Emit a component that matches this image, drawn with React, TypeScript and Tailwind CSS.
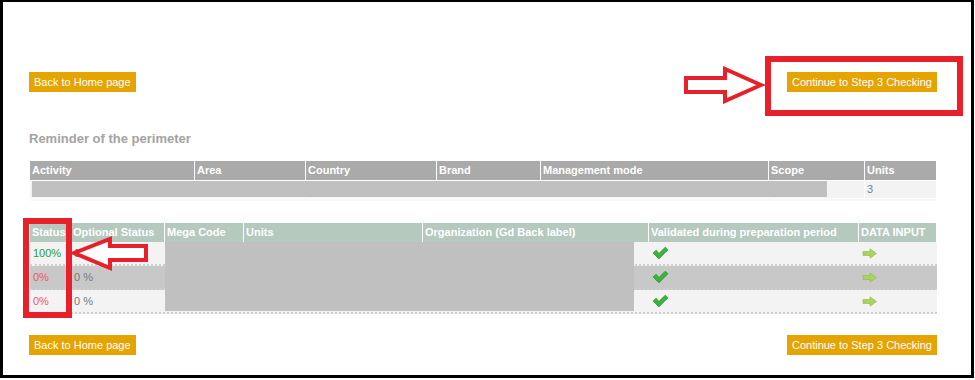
const btn =
  "h-[20px] px-[5px] bg-[#e5a400] text-white text-[11px] leading-[20px]";

const perimeterCols = [
  { label: "Activity", w: "w-[164px]" },
  { label: "Area", w: "w-[110px]" },
  { label: "Country", w: "w-[130px]" },
  { label: "Brand", w: "w-[103px]" },
  { label: "Management mode", w: "w-[227px]" },
  { label: "Scope", w: "w-[95px]" },
  { label: "Units", w: "w-[71px]" },
];

const statusCols = [
  { label: "Status", w: "w-[40px]" },
  { label: "Optional Status", w: "w-[93px]" },
  { label: "Mega Code", w: "w-[78px]" },
  { label: "Units", w: "w-[178px]" },
  { label: "Organization (Gd Back label)", w: "w-[225px]" },
  { label: "Validated during preparation period", w: "w-[209px]" },
  { label: "DATA INPUT", w: "w-[77px]" },
];

const rows = [
  { status: "100%", ok: true, bg: "bg-[#f3f3f3]" },
  { status: "0%", ok: false, bg: "bg-[#c8c8c8]" },
  { status: "0%", ok: false, bg: "bg-[#f3f3f3]" },
];

function Check() {
  return (
    <svg width="17" height="14" viewBox="0 0 16 13">
      <path d="M1 6.5 L4 4 L6.5 7 L12.5 1 L15 3.5 L6.5 12 Z" fill="#3db23d" stroke="#2e9a2e" strokeWidth="0.8" />
    </svg>
  );
}

function GoArrow() {
  return (
    <svg width="16" height="11" viewBox="0 0 16 11">
      <path d="M1 3.5 H8 V0.8 L14.5 5.5 L8 10.2 V7.5 H1 Z" fill="#a9d45c" stroke="#8fb84a" strokeWidth="0.6" />
    </svg>
  );
}

export default function App() {
  return (
    <div className="relative w-[975px] h-[380px] bg-white font-['Liberation_Sans',Arial,sans-serif]">
      <div className="h-[378px] w-[974px] border-[3px] border-t-2 border-black pl-[26px] pt-[70px]">
        <div className="w-[908px]">
          <div className="flex justify-between">
            <button className={btn}>Back to Home page</button>
            <button className={btn}>Continue to Step 3 Checking</button>
          </div>

          <div className="mt-[39px] text-[13px] leading-[16px] font-bold text-[#a3a3a3]">
            Reminder of the perimeter
          </div>

          {/* perimeter table */}
          <div className="relative ml-[1px] mt-[14px]">
            <div className="flex gap-x-[1px]">
              {perimeterCols.map((c) => (
                <div
                  key={c.label}
                  className={`${c.w} h-[19px] bg-[#aaaaaa] px-[2px] text-[11px] leading-[19px] font-bold text-white`}
                >
                  {c.label}
                </div>
              ))}
            </div>
            <div className="mt-[1px] flex gap-x-[1px]">
              {perimeterCols.map((c) => (
                <div
                  key={c.label}
                  className={`${c.w} h-[17px] bg-[#f3f3f3] px-[2px] text-[11px] leading-[17px] text-[#808080]`}
                >
                  {c.label === "Units" ? "3" : ""}
                </div>
              ))}
            </div>
            <div className="mt-[1px] h-[2px] w-[906px] bg-[#f6f6f6]" />
            <div className="absolute left-[2px] top-[20px] h-[16px] w-[795px] bg-[#c0c0c0]" />
          </div>

          {/* status table */}
          <div className="relative ml-[1px] mt-[22px]">
            <div className="flex gap-x-[1px]">
              {statusCols.map((c) => (
                <div
                  key={c.label}
                  className={`${c.w} h-[19px] bg-[#b5c9bf] px-[2px] text-[11px] leading-[19px] font-bold text-white whitespace-nowrap overflow-hidden`}
                >
                  {c.label}
                </div>
              ))}
            </div>
            {rows.map((r, i) => (
              <div
                key={i}
                className={`flex gap-x-[1px] h-[24px] border-b-2 border-dotted border-[#cfcfcf] ${r.bg}`}
              >
                <div className={`w-[40px] px-[3px] text-[11px] leading-[22px] ${r.ok ? "text-[#2f9a2f]" : "text-[#ee5a5a]"}`}>
                  {r.status}
                </div>
                <div className="w-[93px] px-[3px] text-[11px] leading-[22px] text-[#7a7a7a]">0 %</div>
                <div className="w-[78px]" />
                <div className="w-[178px]" />
                <div className="w-[225px]" />
                <div className="w-[209px] flex items-center pl-[3px]">
                  <Check />
                </div>
                <div className="w-[77px] flex items-center pl-[3px]">
                  <GoArrow />
                </div>
              </div>
            ))}
            <div className="absolute left-[135px] top-[19px] h-[69px] w-[469px] bg-[#c0c0c0]" />
          </div>

          <div className="mt-[21px] flex justify-between">
            <button className={btn}>Back to Home page</button>
            <button className={btn}>Continue to Step 3 Checking</button>
          </div>
        </div>
      </div>

      {/* red annotations */}
      <div className="absolute left-[765px] top-[56px] h-[60px] w-[198px] border-[6px] border-[#e8202a]" />
      <svg className="absolute left-[683px] top-[66px]" width="82" height="38" viewBox="0 0 82 38">
        <polygon
          points="3,12 42,12 42,3 78,19 42,35 42,26 3,26"
          fill="white"
          stroke="#e8202a"
          strokeWidth="4"
          strokeLinejoin="miter"
        />
      </svg>
      <div className="absolute left-[23px] top-[218px] h-[100px] w-[49px] border-[6px] border-[#e8202a]" />
      <svg className="absolute left-[70px] top-[236px]" width="80" height="36" viewBox="0 0 80 36">
        <polygon
          points="4,17 40,3 40,10 76,10 76,24 40,24 40,32"
          fill="white"
          stroke="#e8202a"
          strokeWidth="4"
          strokeLinejoin="miter"
        />
      </svg>
    </div>
  );
}
